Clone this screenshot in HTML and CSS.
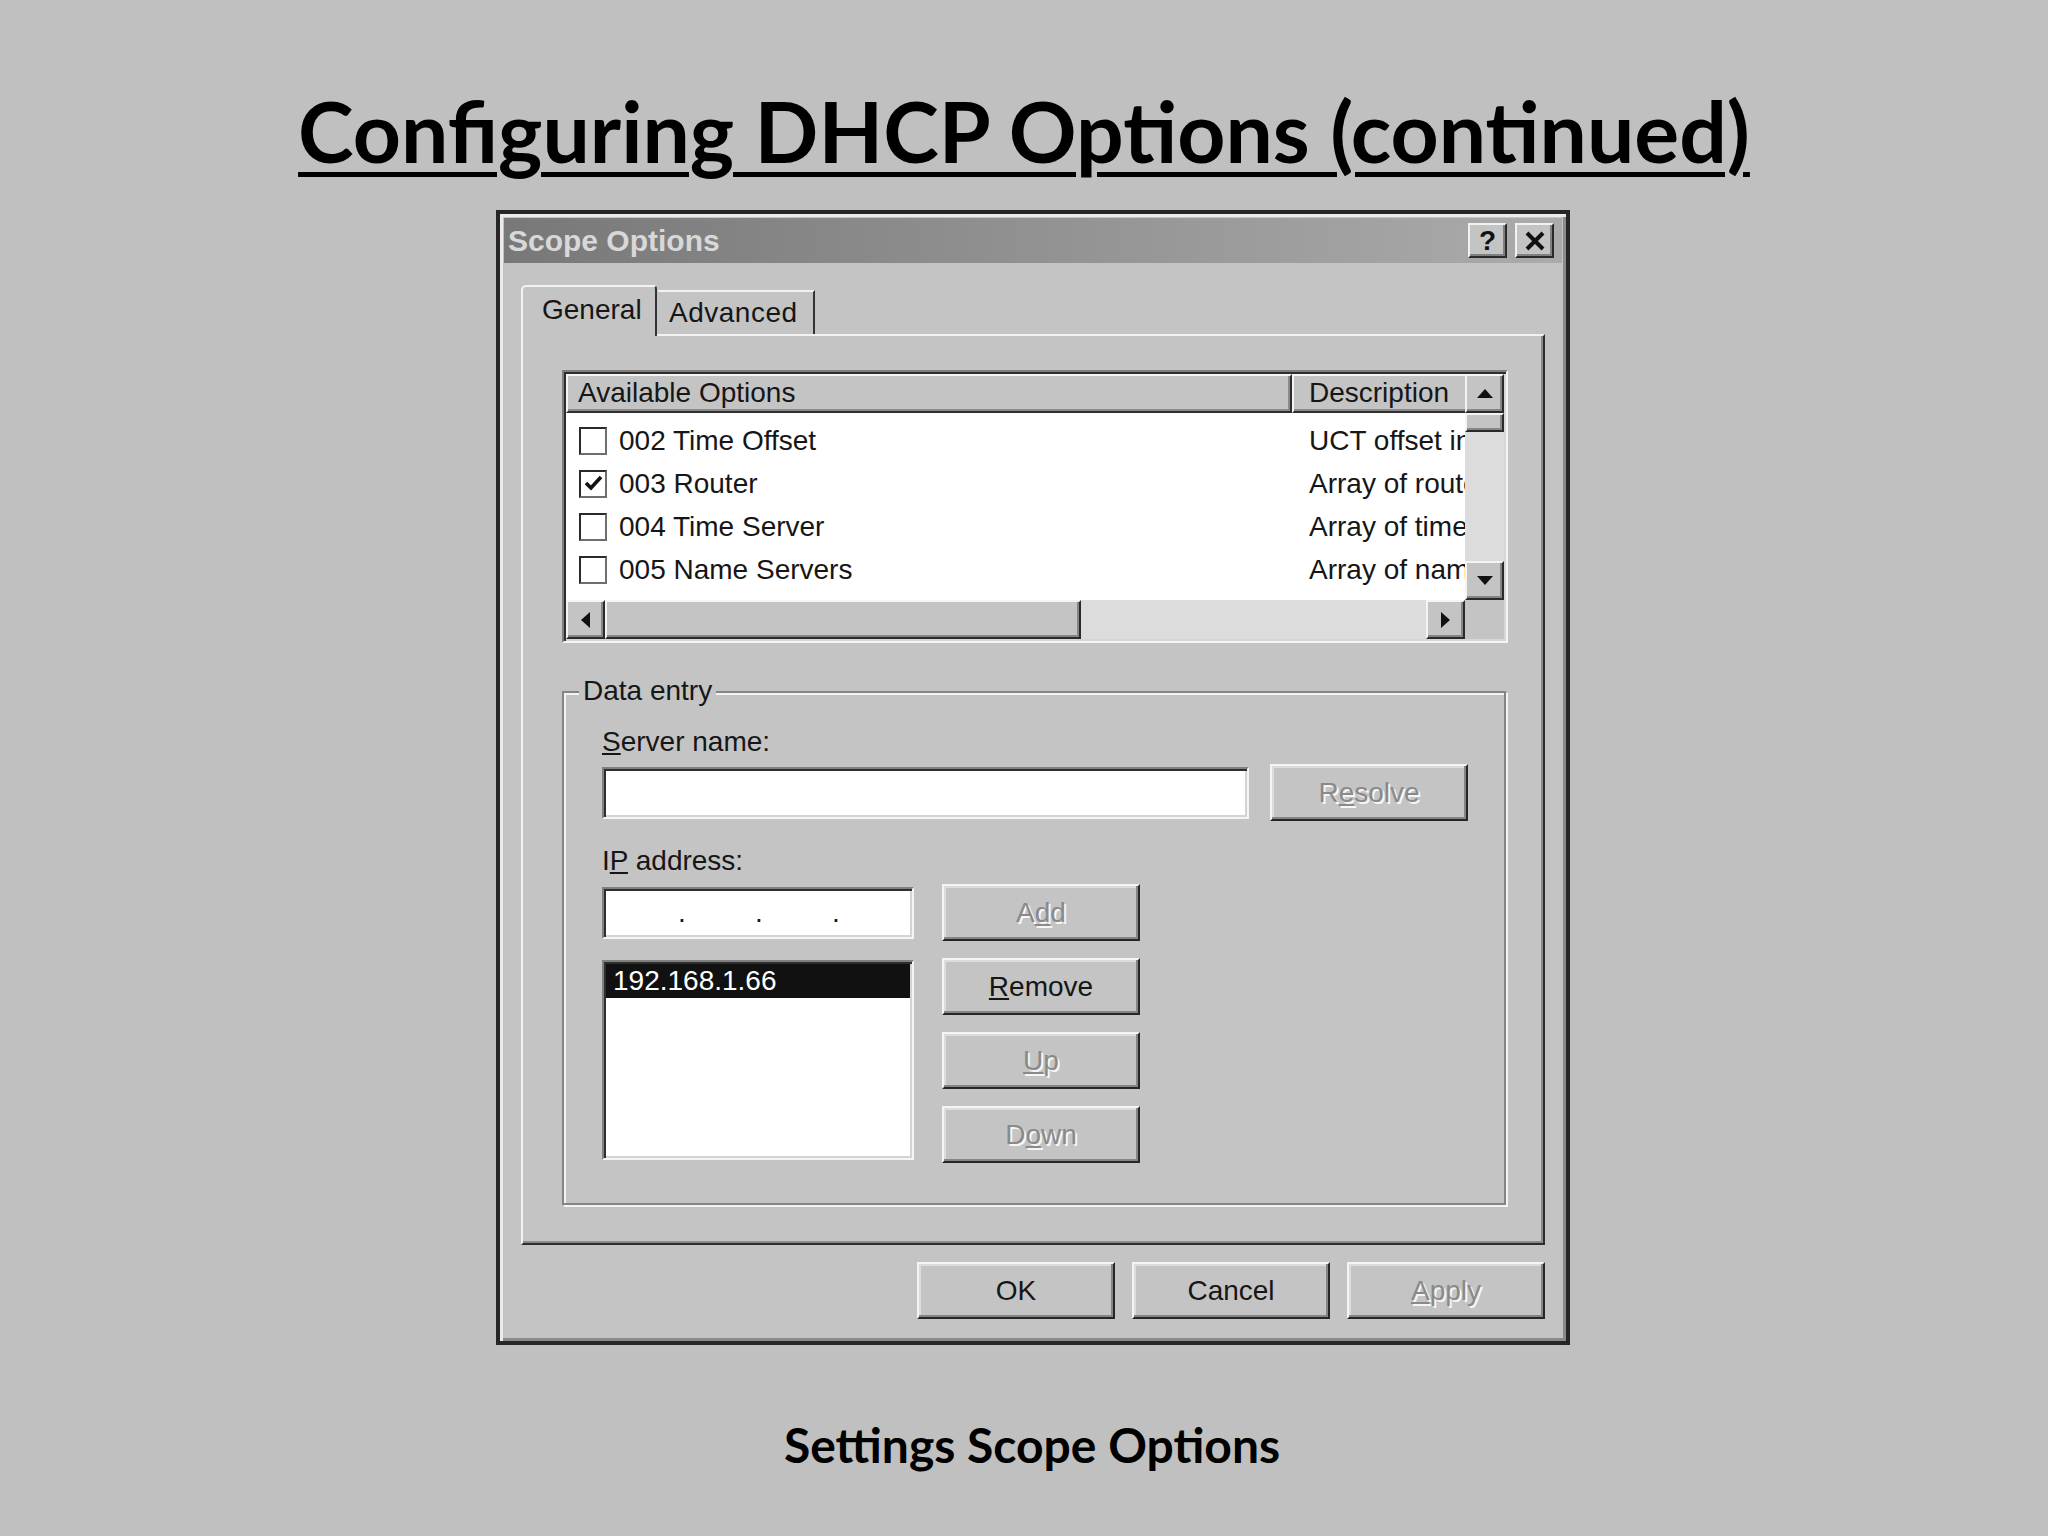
FILE: index.html
```html
<!DOCTYPE html>
<html>
<head>
<meta charset="utf-8">
<link rel="stylesheet" href="styles.css">
</head>
<body>
<div class="slide">
  <h1 class="slide-title"><span>Configuring DHCP Options (continued)</span></h1>

  <div class="dialog-row">
    <div class="dialog">
      <div class="titlebar">
        <span class="titlebar-text">Scope Options</span>
        <div class="tb-buttons">
          <div class="tb-btn">?</div>
          <div class="tb-btn">
            <svg width="22" height="20" viewBox="0 0 22 20"><path d="M3 2 L19 18 M19 2 L3 18" stroke="#111" stroke-width="4" fill="none"/></svg>
          </div>
        </div>
      </div>

      <div class="dialog-body">
        <div class="tabs">
          <div class="tab active">General</div>
          <div class="tab inactive">Advanced</div>
        </div>

        <div class="panel">
          <div class="listview">
            <div class="lv-main">
              <div class="lv-header">
                <div class="lv-hcell col-name">Available Options</div>
                <div class="lv-hcell col-desc">Description</div>
              </div>
              <div class="lv-rows">
                <div class="lv-row">
                  <div class="col-name"><span class="checkbox"></span><span class="opt">002 Time Offset</span></div>
                  <div class="col-desc">UCT offset in seconds from Coordinated Universal Time</div>
                </div>
                <div class="lv-row">
                  <div class="col-name"><span class="checkbox"><svg width="23" height="23" viewBox="0 0 23 23"><path d="M4 11 L9 16 L19 5" stroke="#111" stroke-width="3.6" fill="none"/></svg></span><span class="opt">003 Router</span></div>
                  <div class="col-desc">Array of router addresses ordered by preference</div>
                </div>
                <div class="lv-row">
                  <div class="col-name"><span class="checkbox"></span><span class="opt">004 Time Server</span></div>
                  <div class="col-desc">Array of time server addresses, by preference</div>
                </div>
                <div class="lv-row">
                  <div class="col-name"><span class="checkbox"></span><span class="opt">005 Name Servers</span></div>
                  <div class="col-desc">Array of name servers [IEN 116], by preference</div>
                </div>
              </div>
            </div>
            <div class="vscroll">
              <div class="sb-btn"><svg width="16" height="9" viewBox="0 0 16 9"><polygon points="8,0 16,9 0,9" fill="#111"/></svg></div>
              <div class="sb-thumb-v"></div>
              <div class="sb-track"></div>
              <div class="sb-btn"><svg width="16" height="9" viewBox="0 0 16 9"><polygon points="0,0 16,0 8,9" fill="#111"/></svg></div>
            </div>
            <div class="hscroll">
              <div class="sb-btn"><svg width="9" height="16" viewBox="0 0 9 16"><polygon points="9,0 9,16 0,8" fill="#111"/></svg></div>
              <div class="sb-thumb-h"></div>
              <div class="sb-track"></div>
              <div class="sb-btn"><svg width="9" height="16" viewBox="0 0 9 16"><polygon points="0,0 9,8 0,16" fill="#111"/></svg></div>
            </div>
            <div class="sb-corner"></div>
          </div>

          <div class="group">
            <span class="group-label">Data entry</span>
            <div class="g-label"><u>S</u>erver name:</div>
            <div class="g-row1">
              <div class="field server-field"></div>
              <button class="btn disabled">R<u>e</u>solve</button>
            </div>
            <div class="g-label g-label2">I<u>P</u> address:</div>
            <div class="g-row2">
              <div class="g-left">
                <div class="field ip-field">
                  <span class="ip-part first"></span><span class="ip-dot">.</span><span class="ip-part"></span><span class="ip-dot">.</span><span class="ip-part"></span><span class="ip-dot">.</span><span class="ip-part"></span>
                </div>
                <div class="field listbox">
                  <div class="lb-item selected">192.168.1.66</div>
                </div>
              </div>
              <div class="g-right">
                <button class="btn disabled">A<u>d</u>d</button>
                <button class="btn"><u>R</u>emove</button>
                <button class="btn disabled"><u>U</u>p</button>
                <button class="btn disabled">D<u>o</u>wn</button>
              </div>
            </div>
          </div>
        </div>

        <div class="footer">
          <button class="btn">OK</button>
          <button class="btn">Cancel</button>
          <button class="btn disabled"><u>A</u>pply</button>
        </div>
      </div>
    </div>
  </div>

  <p class="slide-caption">Settings Scope Options</p>
</div>
</body>
</html>
```

FILE: styles.css
```css
* { box-sizing: border-box; }

body {
  margin: 0;
  background: #c0c0c0;
  font-family: "Liberation Sans", Arial, sans-serif;
  color: #161616;
}

.slide {
  width: 2048px;
  height: 1536px;
  overflow: hidden;
}

.slide-title {
  margin: 0;
  height: 210px;
  padding-top: 89px;
  text-align: center;
  font-family: Lato, "Open Sans", sans-serif;
  font-weight: 700;
  font-size: 84px;
  line-height: 84px;
  color: #000;
}

.slide-title span {
  text-decoration: underline;
  text-decoration-thickness: 5px;
  text-underline-offset: 9px;
}

.dialog-row {
  padding-left: 496px;
}

.dialog {
  width: 1074px;
  height: 1135px;
  background: #c4c4c4;
  border: 4px solid #262626;
  box-shadow: inset 3px 3px 0 #ebebeb, inset -3px -3px 0 #8a8a8a;
  padding: 4px;
  display: flex;
  flex-direction: column;
}

.titlebar {
  height: 45px;
  background: linear-gradient(to right, #787878, #ababab);
  display: flex;
  align-items: center;
  justify-content: space-between;
  padding: 0 8px 0 4px;
}

.titlebar-text {
  color: #d8d8d8;
  font-weight: 700;
  font-size: 30px;
}

.tb-buttons {
  display: flex;
  gap: 8px;
}

.tb-btn {
  width: 39px;
  height: 35px;
  background: #c4c4c4;
  border: 2px solid;
  border-color: #f2f2f2 #2a2a2a #2a2a2a #f2f2f2;
  box-shadow: inset -2px -2px 0 #808080;
  display: flex;
  align-items: center;
  justify-content: center;
  font-weight: 700;
  font-size: 28px;
  color: #111;
}

.dialog-body {
  flex: 1;
  padding: 22px 17px 0;
  display: flex;
  flex-direction: column;
}

.tabs {
  display: flex;
  align-items: flex-end;
  height: 51px;
  margin-bottom: -2px;
  position: relative;
  z-index: 1;
}

.tab {
  background: #c4c4c4;
  border: 2px solid;
  border-bottom: none;
  border-color: #f2f2f2 #333333 transparent #f2f2f2;
  font-size: 28px;
  line-height: 34px;
  color: #161616;
  white-space: nowrap;
}

.tab.active {
  width: 136px;
  height: 51px;
  padding: 6px 0 0 19px;
  border-radius: 5px 4px 0 0;
}

.tab.inactive {
  width: 158px;
  height: 44px;
  margin-bottom: 2px;
  padding: 4px 0 0 10px;
  border-left-color: #c4c4c4;
  letter-spacing: 0.5px;
}

.panel {
  height: 911px;
  border: 2px solid;
  border-color: #f2f2f2 #2e2e2e #2e2e2e #f2f2f2;
  box-shadow: inset -2px -2px 0 #8a8a8a;
  padding: 34px 0 0 39px;
}

/* list view */
.listview {
  width: 946px;
  height: 273px;
  background: #fff;
  border: 2px solid;
  border-color: #7e7e7e #f4f4f4 #f4f4f4 #7e7e7e;
  box-shadow: inset 2px 2px 0 #2e2e2e, inset -2px -2px 0 #d6d6d6;
  padding: 2px;
  display: grid;
  grid-template-columns: 1fr 39px;
  grid-template-rows: 1fr 39px;
}

.lv-main {
  overflow: hidden;
  min-width: 0;
}

.lv-header {
  display: flex;
  height: 39px;
  width: 1000px;
}

.lv-hcell {
  background: #c4c4c4;
  border: 2px solid;
  border-color: #f4f4f4 #2e2e2e #2e2e2e #f4f4f4;
  box-shadow: inset -2px -2px 0 #8a8a8a;
  font-size: 28px;
  line-height: 33px;
  white-space: nowrap;
}

.lv-hcell.col-name {
  flex: 0 0 726px;
  padding-left: 10px;
}

.lv-hcell.col-desc {
  flex: 0 0 260px;
  padding-left: 15px;
}

.lv-rows {
  padding-top: 6px;
}

.lv-row {
  display: flex;
  height: 43px;
  align-items: center;
  font-size: 28px;
  white-space: nowrap;
  width: 1100px;
}

.lv-row .col-name {
  flex: 0 0 726px;
  display: flex;
  align-items: center;
}

.lv-row .col-desc {
  padding-left: 17px;
}

.checkbox {
  width: 28px;
  height: 28px;
  margin-left: 13px;
  margin-right: 12px;
  background: #fff;
  border: 2px solid;
  border-color: #2a2a2a #6e6e6e #6e6e6e #2a2a2a;
  display: flex;
  align-items: center;
  justify-content: center;
}

/* scroll bars */
.vscroll {
  display: flex;
  flex-direction: column;
}

.hscroll {
  display: flex;
}

.sb-btn {
  flex: 0 0 39px;
  width: 39px;
  height: 39px;
  background: #c4c4c4;
  border: 2px solid;
  border-color: #f4f4f4 #2a2a2a #2a2a2a #f4f4f4;
  box-shadow: inset -2px -2px 0 #858585;
  display: flex;
  align-items: center;
  justify-content: center;
}

.sb-thumb-v,
.sb-thumb-h {
  background: #c4c4c4;
  border: 2px solid;
  border-color: #f4f4f4 #2a2a2a #2a2a2a #f4f4f4;
  box-shadow: inset -2px -2px 0 #858585;
}

.sb-thumb-v {
  flex: 0 0 19px;
}

.sb-thumb-h {
  flex: 0 0 476px;
}

.sb-track {
  flex: 1;
  background: #dcdcdc;
}

.sb-corner {
  background: #c4c4c4;
}

/* group box */
.group {
  position: relative;
  width: 944px;
  height: 514px;
  margin-top: 48px;
  border: 2px solid #858585;
  box-shadow: 2px 2px 0 #f4f4f4, inset 2px 2px 0 #f4f4f4;
  padding: 34px 0 0 38px;
}

.group-label {
  position: absolute;
  left: 15px;
  top: -19px;
  padding: 0 4px;
  background: #c4c4c4;
  font-size: 28px;
  line-height: 34px;
}

.g-label {
  font-size: 28px;
  line-height: 30px;
}

.g-label2 {
  margin-top: 25px;
}

.g-row1 {
  display: flex;
  align-items: center;
  gap: 21px;
  margin-top: 7px;
  height: 57px;
}

.field {
  background: #fff;
  border: 2px solid;
  border-color: #808080 #f4f4f4 #f4f4f4 #808080;
  box-shadow: inset 2px 2px 0 #2e2e2e, inset -2px -2px 0 #d4d4d4;
}

.server-field {
  width: 647px;
  height: 52px;
}

.g-row2 {
  display: flex;
  gap: 28px;
  margin-top: 8px;
}

.g-left {
  width: 312px;
  display: flex;
  flex-direction: column;
}

.ip-field {
  height: 52px;
  margin-top: 3px;
  display: flex;
  padding: 2px;
  font-size: 28px;
  line-height: 44px;
}

.ip-part {
  width: 71px;
}

.ip-part.first {
  width: 72px;
}

.ip-dot {
  width: 6px;
  text-align: center;
}

.listbox {
  height: 200px;
  margin-top: 21px;
  padding: 2px;
}

.lb-item {
  height: 34px;
  padding-left: 7px;
  font-size: 28px;
  line-height: 34px;
  white-space: nowrap;
}

.lb-item.selected {
  background: #111;
  color: #fff;
}

.g-right {
  display: flex;
  flex-direction: column;
  gap: 17px;
}

/* buttons */
.btn {
  width: 198px;
  height: 57px;
  flex: 0 0 auto;
  padding: 0;
  margin: 0;
  background: #c4c4c4;
  border: 2px solid;
  border-color: #f4f4f4 #262626 #262626 #f4f4f4;
  box-shadow: inset -2px -2px 0 #858585, inset 2px 2px 0 #dcdcdc;
  font-family: "Liberation Sans", Arial, sans-serif;
  font-size: 28px;
  color: #161616;
  display: flex;
  align-items: center;
  justify-content: center;
}

.btn.disabled {
  color: #8a8a8a;
  text-shadow: 2px 2px 0 #f6f6f6;
}

.footer {
  display: flex;
  justify-content: flex-end;
  gap: 17px;
  margin-top: 17px;
}

.slide-caption {
  margin: 70px 0 0;
  padding-left: 16px;
  text-align: center;
  font-family: Lato, "Open Sans", sans-serif;
  font-weight: 700;
  font-size: 48px;
  line-height: 60px;
  color: #000;
}
```
